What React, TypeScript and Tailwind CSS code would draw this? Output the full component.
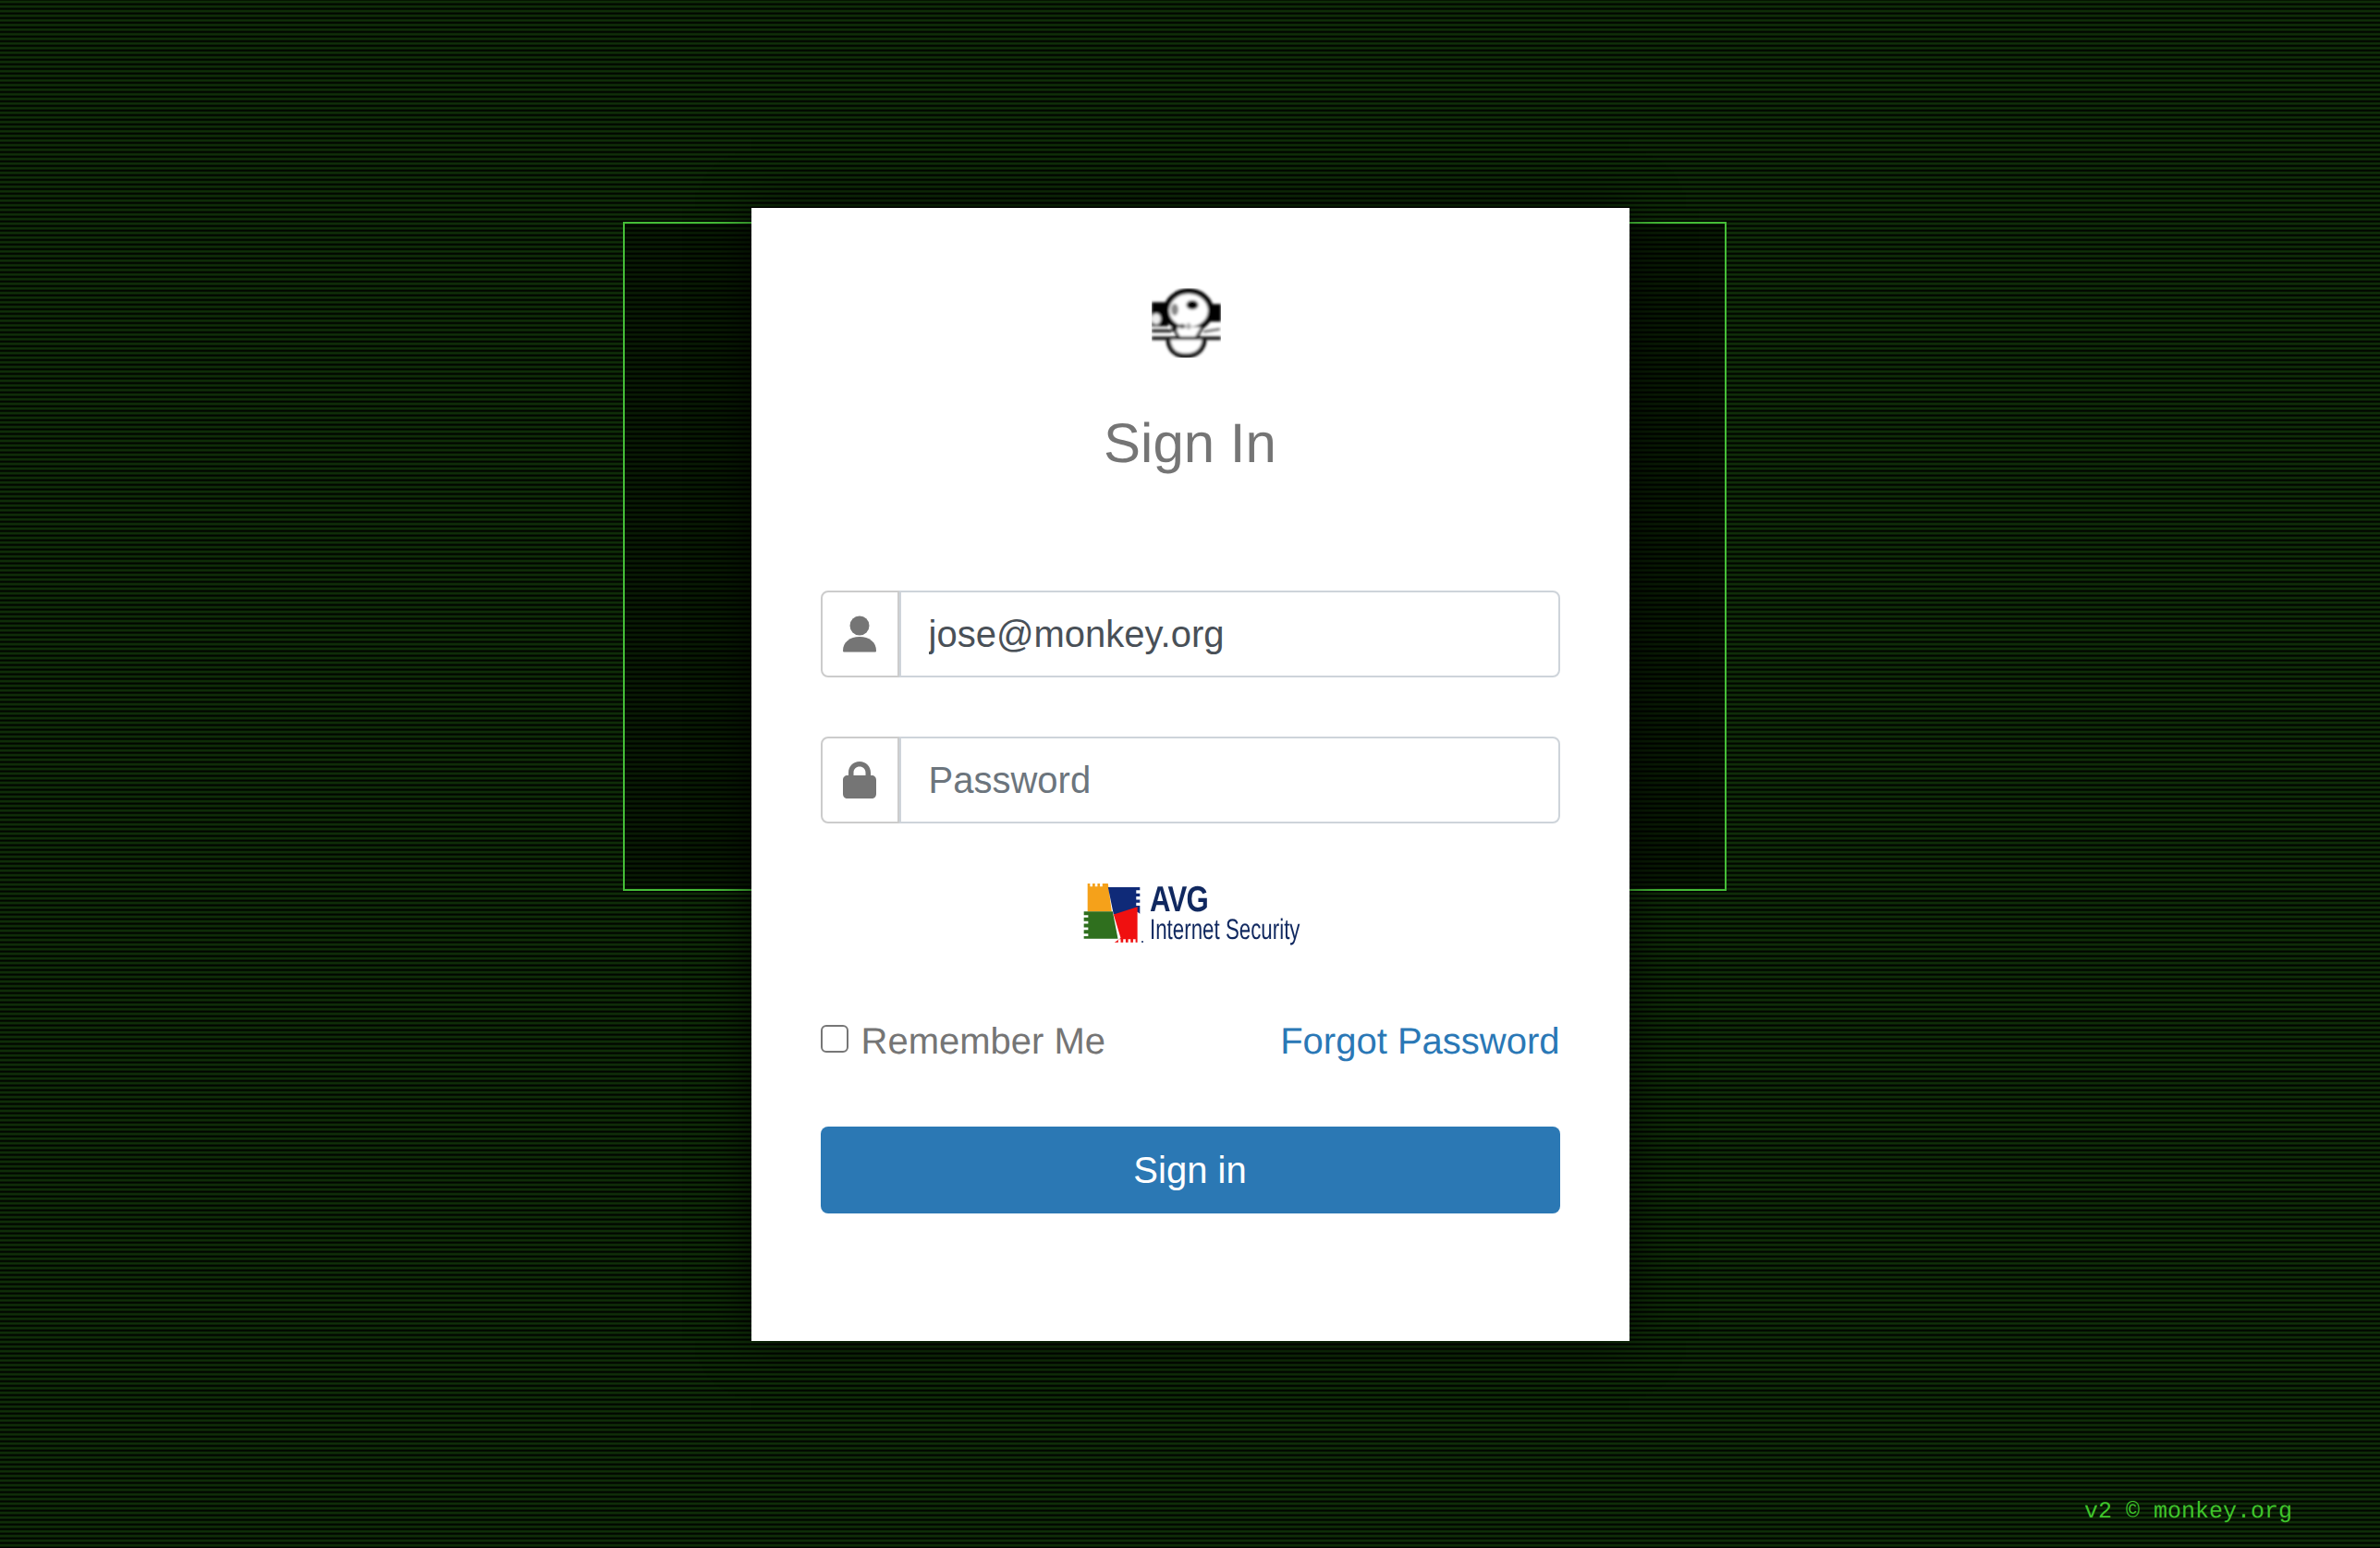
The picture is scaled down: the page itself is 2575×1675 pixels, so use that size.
const sans = "font-['Liberation_Sans',Arial,sans-serif]"

function MonkeyLogo() {
  return (
    <svg viewBox="0 0 75 75" className="block h-[75px] w-[75px]">
      <defs>
        <filter id="soft" x="-10%" y="-10%" width="120%" height="120%">
          <feGaussianBlur stdDeviation="1.5" />
        </filter>
      </defs>
      <g filter="url(#soft)">
        <path d="M0 15h18v26H0z" fill="#000" />
        <ellipse cx="5" cy="33" rx="5" ry="6" fill="#eee" />
        <path d="M62 17h13v19H62z" fill="#000" />
        <ellipse cx="40" cy="24" rx="24" ry="21" fill="#fff" stroke="#000" strokeWidth="6" />
        <path d="M20 42h36l-8 13H30z" fill="#fff" />
        <path d="M22 40l8 14M56 40l-8 14" stroke="#000" strokeWidth="3" />
        <ellipse cx="44" cy="18" rx="6.500" ry="5" fill="#000" />
        <ellipse cx="25" cy="23" rx="4" ry="6.500" fill="#888" />
        <ellipse cx="33" cy="41" rx="3.500" ry="2.500" fill="#555" />
        <ellipse cx="40" cy="41" rx="2.500" ry="3.500" fill="#aaa" />
        <path d="M0 46h20l8-3" stroke="#000" strokeWidth="3" fill="none" />
        <path d="M0 54h75" stroke="#000" strokeWidth="3.500" fill="none" />
        <path d="M56 47l18-3" stroke="#444" strokeWidth="2" fill="none" />
        <path d="M18 56c1 11 8 17 19 17s19-6 20-17" stroke="#000" strokeWidth="5" fill="#fff" />
      </g>
    </svg>
  )
}

function AvgLogo() {
  return (
    <div className="flex items-start">
      <svg viewBox="70 80 200 200" className="h-[67px] w-[67px] shrink-0 blur-[0.5px]">
        <path fill="#f5a11a" d="M84 80h8v10h8V80h8v10h8V80h8v10h8V80h18l12 90H84z" />
        <path fill="#2f6f1e" d="M72 170h93l17 88H72v-8h14v-8H72v-12h14v-8H72v-12h14v-8H72v-12h14v-8H72z" />
        <path fill="#0f2a78" d="M150 92h103v10h-12v10h12v10h-12v10h12v10h-12v10h12v26l-8-6-77 8z" />
        <path fill="#f01010" d="M168 180l77-25v115h-6v-10h-8v10h-8v-10h-8v10h-8v-10h-8v10h-8v-10h-8v10h-12l20-14z" />
        <circle cx="261" cy="268" r="3" fill="#10285f" />
      </svg>
      <div className={`${sans} ml-[5px] flex flex-col text-[#10285f]`}>
        <span className="mt-[1px] h-[33px] origin-left scale-x-[0.8] text-[39px] leading-[33px] font-bold tracking-[-1px]">AVG</span>
        <span className="mt-[-2px] w-[161px] origin-left scale-x-[0.72] text-[31px] leading-[35px] font-medium whitespace-nowrap">Internet Security</span>
      </div>
    </div>
  )
}

function UserIcon() {
  return (
    <svg viewBox="0 0 36 40" className="h-[40px] w-[36px]" fill="#757575">
      <circle cx="18" cy="11" r="10.500" />
      <path d="M0 38c0-9 7.500-15 18-15s18 6 18 15c0 1-.5 1.500-1.500 1.500h-33C.5 39.500 0 39 0 38z" />
    </svg>
  )
}

function LockIcon() {
  return (
    <svg viewBox="0 0 36 40" className="h-[40px] w-[36px]" fill="#757575">
      <path d="M6 15V12C6 5 11 0 18 0s12 5 12 12v3h1c3 0 5 2 5 5v15c0 3-2 5-5 5H5c-3 0-5-2-5-5V20c0-3 2-5 5-5zm5.500 0h13V12c0-4-3-6.500-6.500-6.500S11.500 8 11.500 12z" />
    </svg>
  )
}

function Field({ icon, value, placeholder }: { icon: React.ReactNode; value?: string; placeholder?: string }) {
  return (
    <div className="flex h-[94px] w-[800px]">
      <div className="flex w-[85px] items-center justify-center rounded-l-[8px] border-[2.5px] border-[#cccccc] bg-white">
        {icon}
      </div>
      <input
        readOnly
        defaultValue={value}
        placeholder={placeholder}
        className={`${sans} min-w-0 flex-1 rounded-r-[8px] border-[2.5px] border-l-[2px] border-[#ced4da] bg-white pl-[30px] text-[40px] text-[#495057] outline-none placeholder:text-[#6c757d]`}
      />
    </div>
  )
}

export default function App() {
  return (
    <div className="relative flex h-[1675px] w-[2575px] flex-col overflow-hidden bg-[repeating-linear-gradient(to_bottom,#000000_0px,#0c2806_1px,#12320a_2px,#0c2806_3px,#030a02_4px,#000000_5px)] [text-rendering:geometricPrecision]">
      <div className="absolute top-[240px] left-[674px] h-[724px] w-[1194px] border-[2.5px] border-[#45bd37] bg-black/40" />

      <div className="relative flex justify-center pt-[225px]">
        <div className="flex h-[1226px] w-[950px] flex-col items-center bg-white px-[75px] pt-[87px] shadow-[0_0_50px_rgba(0,0,0,0.7)]">
          <div className="mr-[8px]">
            <MonkeyLogo />
          </div>
          <h2 className={`${sans} mt-[56px] text-[60px] leading-[74px] text-[#757575]`}>Sign In</h2>

          <div className="mt-[122px] flex flex-col gap-[64px]">
            <Field icon={<UserIcon />} value="jose@monkey.org" />
            <Field icon={<LockIcon />} placeholder="Password" />
          </div>

          <div className="mt-[65px] ml-[2px]">
            <AvgLogo />
          </div>

          <div className={`${sans} mt-[74px] flex w-[800px] items-center justify-between text-[40px] leading-[60px]`}>
            <label className="flex items-center text-[#757575]">
              <span className="mt-[-6px] mr-[14px] h-[30px] w-[30px] rounded-[6px] border-[2.5px] border-[#767676] bg-white" />
              Remember Me
            </label>
            <a className="text-[#2a78b6]">Forgot Password</a>
          </div>

          <button className={`${sans} mt-[62px] h-[94px] w-[800px] rounded-[8px] bg-[#2b78b4] text-[40px] text-white`}>
            Sign in
          </button>
        </div>
      </div>

      <div className="relative mt-auto mr-[95px] mb-[26px] self-end font-['Liberation_Mono',monospace] text-[25px] leading-[26px] text-[#3fc42b]">
        v2 © monkey.org
      </div>
    </div>
  )
}
